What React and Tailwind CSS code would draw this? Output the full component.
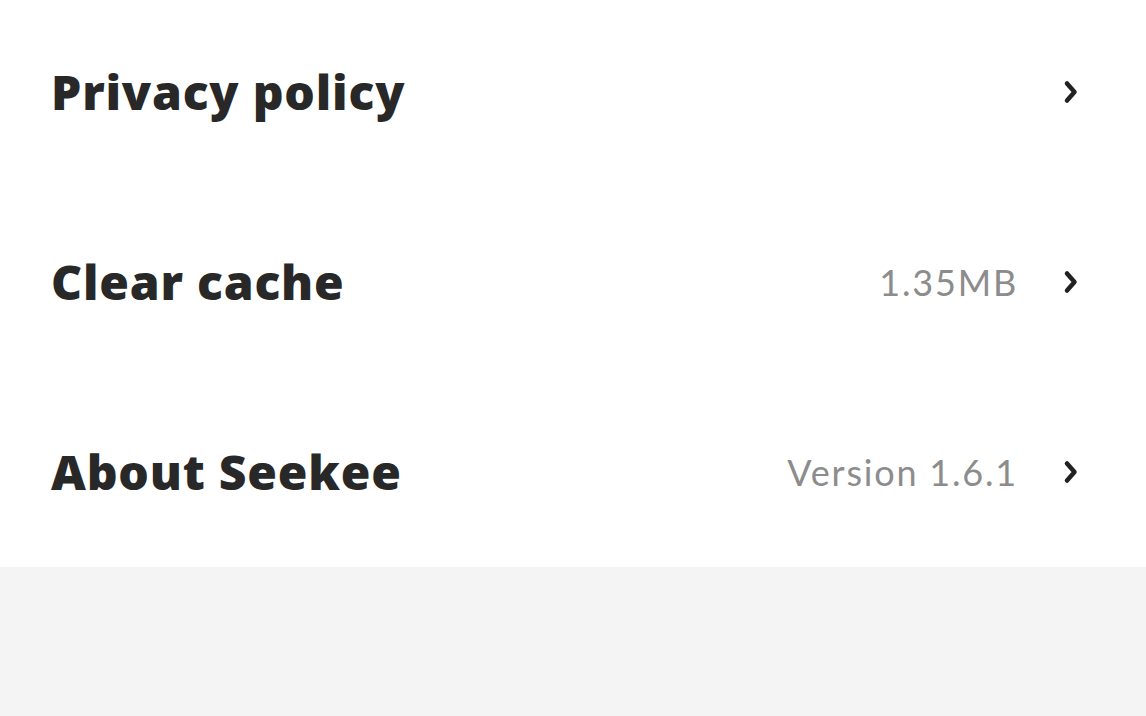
function Chevron() {
  return (
    <svg width="18" height="26" viewBox="0 0 18 26" fill="none" className="shrink-0">
      <path d="M5 4.5 L12.5 13 L5 21.5" stroke="#222222" strokeWidth="4.5" strokeLinecap="round" strokeLinejoin="round" />
    </svg>
  );
}

function Row({ title, value }) {
  return (
    <div className="flex h-[190px] items-center justify-between pl-[51px] pr-[66px]">
      <span className="font-['Open_Sans',sans-serif] text-[48px] font-extrabold tracking-[0.8px] text-[#282828]">{title}</span>
      <div className="flex items-center gap-[44px]">
        {value && (
          <span className="font-['Lato',sans-serif] text-[36px] tracking-[1.8px] text-[#8c8c8c]">{value}</span>
        )}
        <Chevron />
      </div>
    </div>
  );
}

export default function App() {
  return (
    <div className="flex h-[716px] w-[1146px] flex-col overflow-hidden bg-[#f4f4f4]">
      <div className="-mt-[3px] bg-white">
        <Row title="Privacy policy" />
        <Row title="Clear cache" value="1.35MB" />
        <Row title="About Seekee" value="Version 1.6.1" />
      </div>
    </div>
  );
}
